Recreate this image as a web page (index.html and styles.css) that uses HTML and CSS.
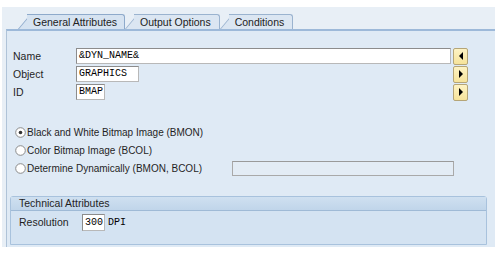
FILE: index.html
```html
<html><head><title>Graphic Attributes</title>
<link rel="stylesheet" href="styles.css">
</head>
<body>
    <div class="window">
        <div class="tabstrip">
            <div class="tab active"><span>General Attributes</span></div>
            <div class="tab"><span>Output Options</span></div>
            <div class="tab"><span>Conditions</span></div>
        </div>
        <div class="content">
            <div class="fields">
                <div class="row">
                    <span class="label">Name</span>
                    <span class="input input-name">&amp;DYN_NAME&amp;</span>
                    <span class="nav-btn">
                        <svg width="6" height="8" viewBox="0 0 6 8"><path d="M5 0 L5 8 L1 4 Z" fill="#000"/></svg>
                    </span>
                </div>
                <div class="row">
                    <span class="label">Object</span>
                    <span class="input input-object">GRAPHICS</span>
                    <span class="nav-btn">
                        <svg width="6" height="8" viewBox="0 0 6 8"><path d="M1 0 L1 8 L5 4 Z" fill="#000"/></svg>
                    </span>
                </div>
                <div class="row">
                    <span class="label">ID</span>
                    <span class="input input-id">BMAP</span>
                    <span class="nav-btn">
                        <svg width="6" height="8" viewBox="0 0 6 8"><path d="M1 0 L1 8 L5 4 Z" fill="#000"/></svg>
                    </span>
                </div>
            </div>

            <div class="radios">
                <div class="radio-row">
                    <svg class="radio" width="11" height="11" viewBox="0 0 11 11"><circle cx="5.5" cy="5.5" r="4.8" fill="#fff" stroke="#8a8a8a"/><circle cx="5.5" cy="5.5" r="1.8" fill="#333"/></svg>
                    <span>Black and White Bitmap Image (BMON)</span>
                </div>
                <div class="radio-row">
                    <svg class="radio" width="11" height="11" viewBox="0 0 11 11"><circle cx="5.5" cy="5.5" r="4.8" fill="#fff" stroke="#8a8a8a"/></svg>
                    <span>Color Bitmap Image (BCOL)</span>
                </div>
                <div class="radio-row">
                    <svg class="radio" width="11" height="11" viewBox="0 0 11 11"><circle cx="5.5" cy="5.5" r="4.8" fill="#fff" stroke="#8a8a8a"/></svg>
                    <span class="radio-text-wide">Determine Dynamically (BMON, BCOL)</span>
                    <span class="input input-disabled"></span>
                </div>
            </div>

            <div class="group">
                <div class="group-header">Technical Attributes</div>
                <div class="group-body">
                    <span class="label">Resolution</span>
                    <span class="input input-res">300</span>
                    <span class="unit">DPI</span>
                </div>
            </div>
        </div>
    </div>
</body></html>
```

FILE: styles.css
```css
body {
    margin: 0;
    background: #ffffff;
    font-family: 'Liberation Sans', Arial, sans-serif;
    font-size: 10.5px;
    color: #1f1f1f;
}

.window {
    margin: 7px 5px 6px 2px;
    height: 240px;
    background: #e8eff6;
    display: flex;
    flex-direction: column;
}

.tabstrip {
    height: 22px;
    padding-left: 16px;
    display: flex;
    align-items: flex-end;
}

.tab {
    position: relative;
    height: 15px;
    padding: 0 9px 0 15px;
    display: flex;
    align-items: center;
    color: #222;
}

.tab span {
    position: relative;
    z-index: 2;
}

/* slanted left side */
.tab::before {
    content: '';
    position: absolute;
    left: 0;
    bottom: 0;
    width: 14px;
    height: 14px;
    background: #dbe6f2;
    border-left: 1px solid #9ab3cf;
    border-top: 1px solid #9ab3cf;
    transform: skewX(-40deg);
    transform-origin: bottom left;
    z-index: 1;
}

.tab::after {
    content: '';
    position: absolute;
    left: 9px;
    right: 0;
    bottom: 0;
    height: 14px;
    background: #dbe6f2;
    border-top: 1px solid #9ab3cf;
    border-right: 1px solid #9ab3cf;
    border-radius: 0 3px 0 0;
    z-index: 1;
}

.tab.active::before,
.tab.active::after {
    background: #d6e3f1;
    border-color: #8eaacb;
}

.tab.active {
    padding-right: 8px;
}

.content {
    flex: 1;
    margin-left: 4px;
    background: #dfeaf5;
    border-top: 2px solid #9db9d9;
    border-left: 1px solid #afc3d8;
}

.fields {
    padding: 17px 27px 0 6px;
}

.row {
    display: flex;
    align-items: center;
    height: 16px;
    margin-bottom: 2px;
}

.label {
    width: 63px;
    flex-shrink: 0;
}

.input {
    height: 14px;
    box-sizing: content-box;
    background: #ffffff;
    border: 1px solid #b8b8b8;
    border-top-color: #8c8c8c;
    border-left-color: #8c8c8c;
    font-family: 'Liberation Mono', 'Courier New', monospace;
    font-size: 10px;
    line-height: 14px;
    padding: 0 2px;
    color: #000;
}

.input-name {
    flex: 1;
}

.input-object {
    width: 57px;
}

.input-id {
    width: 23px;
}

.nav-btn {
    margin-left: auto;
    width: 13px;
    height: 15px;
    background: linear-gradient(#fdf3c4, #f6e39a);
    border: 1px solid #b5a577;
    border-radius: 2px;
    display: flex;
    align-items: center;
    justify-content: center;
}

.input-name + .nav-btn {
    margin-left: 2px;
}

.radios {
    padding: 21px 0 0 8px;
    font-size: 10px;
}

.radio-row {
    display: flex;
    align-items: center;
    height: 18px;
}

.radio {
    margin-right: 1px;
}

.radio-text-wide {
    width: 205px;
}

.input-disabled {
    width: 216px;
    height: 13px;
    background: #e3ecf5;
    border-color: #a9a9a9;
    border-top-color: #9a9a9a;
}

.group {
    margin: 19px 8px 0 3px;
    border: 1px solid #a8c2dd;
    border-radius: 3px 3px 0 0;
    background: #d4e3f2;
}

.group-header {
    height: 13px;
    line-height: 13px;
    padding-left: 8px;
    background: linear-gradient(#cfe0f0, #c0d5ea);
    border-bottom: 1px solid #9fbad6;
}

.group-body {
    height: 33px;
    padding: 3px 0 0 8px;
    display: flex;
    align-items: flex-start;
    box-sizing: border-box;
}

.group-body .label {
    line-height: 17px;
}

.input-res {
    width: 17px;
    height: 15px;
    line-height: 15px;
}

.unit {
    margin-left: 3px;
    font-family: 'Liberation Mono', 'Courier New', monospace;
    font-size: 10px;
    line-height: 17px;
    color: #000;
}
```
